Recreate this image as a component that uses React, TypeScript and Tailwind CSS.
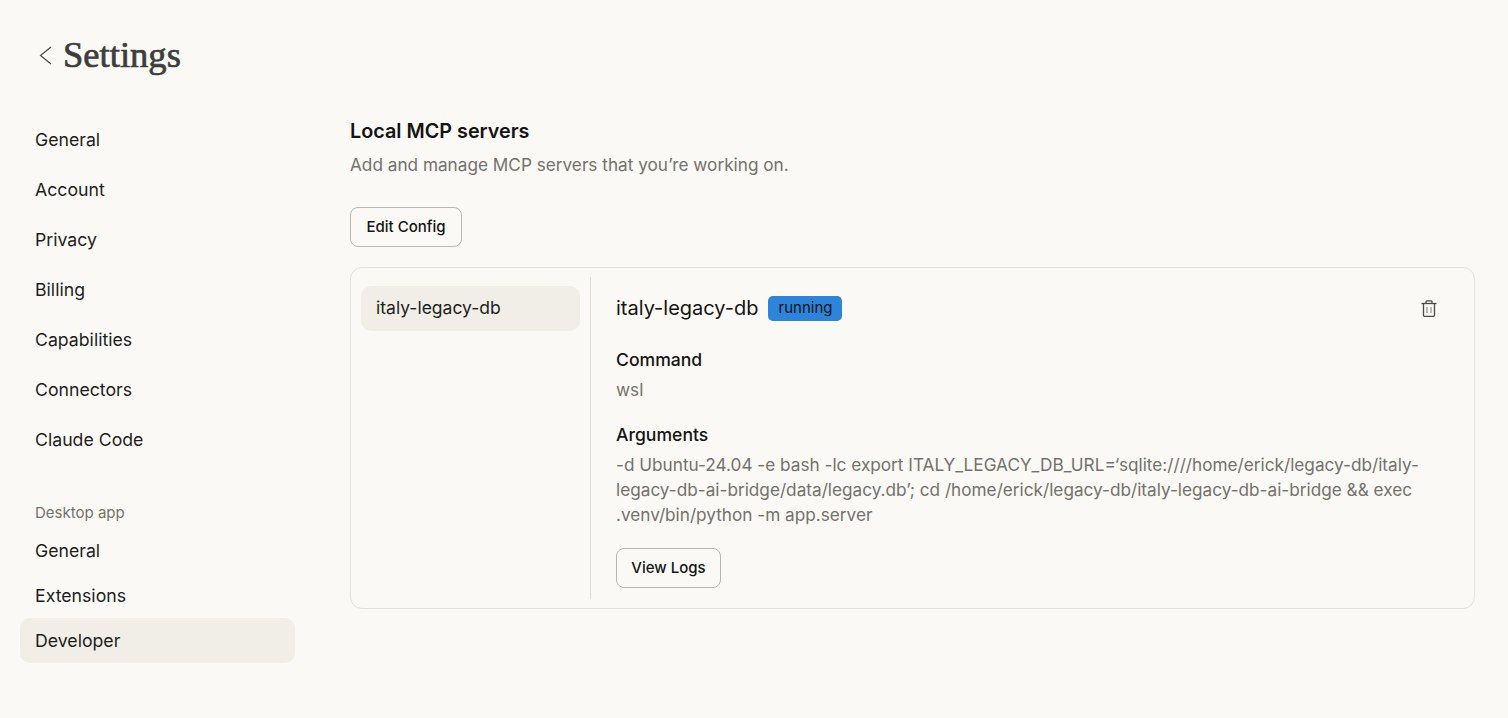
const MAIN_NAV = ['General', 'Account', 'Privacy', 'Billing', 'Capabilities', 'Connectors', 'Claude Code'];
const DESKTOP_NAV = ['General', 'Extensions', 'Developer'];

function NavItem({ label, active, desktop }: { label: string; active?: boolean; desktop?: boolean }) {
  return (
    <div
      className={`flex h-[45px] items-center rounded-[10px] px-[15px] text-[17.7px] text-[#1f1e1c] ${desktop ? 'pt-[2px]' : ''} ${active ? 'bg-[#f0eee6]' : ''}`}
    >
      {label}
    </div>
  );
}

function OutlineButton({ label, width }: { label: string; width: string }) {
  return (
    <button
      type="button"
      className={`flex h-10 items-center justify-center rounded-lg border border-[#b9b7b0] text-[15px] font-medium text-[#141413] ${width}`}
    >
      {label}
    </button>
  );
}

export default function App() {
  return (
    <div className="h-[718px] w-[1508px] overflow-hidden bg-[#faf9f5] font-['Inter',sans-serif]">
      {/* ===== Title ===== */}
      <header className="flex h-[110px] items-start pl-[39px] pt-[33px]">
        <svg width="13" height="19" viewBox="0 0 13 19" fill="none" stroke="#4a4945" strokeWidth="1.2" className="mt-[13px] flex-none">
          <polyline points="12,1 1.5,9.5 12,18" />
        </svg>
        <h1 className="ml-[11px] font-['Liberation_Serif',serif] text-[36.6px] leading-[44px] text-[#3d3d3a] [-webkit-text-stroke:0.7px_#3d3d3a]">
          Settings
        </h1>
      </header>

      <div className="flex">
        {/* ===== Left nav ===== */}
        <nav className="ml-5 flex w-[275px] flex-none flex-col">
          <div className="flex flex-col gap-[5px] pt-2">
            {MAIN_NAV.map((label) => (
              <NavItem key={label} label={label} />
            ))}
          </div>
          <div className="mt-[42px] mb-[7px] flex h-4 items-center px-[15px] text-[15px] text-[#73726c]">
            Desktop app
          </div>
          {DESKTOP_NAV.map((label) => (
            <NavItem key={label} label={label} desktop active={label === 'Developer'} />
          ))}
        </nav>

        {/* ===== Main content ===== */}
        <main className="ml-[55px] w-[1125px] flex-none pt-2">
          <h2 className="text-[19.8px] leading-[26px] font-semibold text-[#141413]">Local MCP servers</h2>
          <p className="mt-2 text-[17.2px] leading-[26px] text-[#73726c]">
            Add and manage MCP servers that you’re working on.
          </p>
          <div className="mt-[29px]">
            <OutlineButton label="Edit Config" width="w-28" />
          </div>

          <section className="mt-5 flex h-[342px] rounded-xl border border-[#e3e1da] py-[9px] pl-[10px]">
            <div className="w-[230px] flex-none border-r border-[#dedcd5] pr-[10px] pt-[9px]">
              <div className="flex h-[45px] items-center rounded-[10px] bg-[#f0eee6] px-[15px] text-[17.5px] text-[#1f1e1c]">
                italy-legacy-db
              </div>
            </div>

            <div className="min-w-0 flex-1 pl-[25px] pr-[28px]">
              <div className="mt-[19px] flex h-[25px] items-center">
                <span className="pb-[2px] text-[20px] text-[#141413]">italy-legacy-db</span>
                <span className="ml-[10px] flex h-[25px] w-[74px] items-center justify-center rounded-[5px] bg-[#2c84db] text-[15px] text-[#141413]">
                  running
                </span>
                <svg
                  width="16"
                  height="18"
                  viewBox="0 0 16 18"
                  fill="none"
                  stroke="#4a4945"
                  strokeWidth="1.3"
                  className="ml-auto mr-[9px] flex-none"
                >
                  <path d="M0.5 3.5h15" />
                  <path d="M5 3.5V1.8a1 1 0 0 1 1-1h4a1 1 0 0 1 1 1v1.7" />
                  <path d="M2.5 3.5v11.8a1 1 0 0 0 1 1h9a1 1 0 0 0 1-1V3.5" />
                  <path d="M6 7v6M10 7v6" strokeWidth="1.1" stroke="#8a8984" />
                </svg>
              </div>

              <div className="mt-[26px] text-[17.6px] leading-[26px] font-medium text-[#141413]">Command</div>
              <div className="mt-[4px] text-[17.2px] leading-[25px] text-[#73726c]">wsl</div>

              <div className="mt-[20px] text-[17.6px] leading-[26px] font-medium text-[#141413]">Arguments</div>
              <p className="mt-[4px] text-[17.2px] leading-[25px] text-[#73726c]">
                -d Ubuntu-24.04 -e bash -lc export ITALY_LEGACY_DB_URL=‘sqlite:////home/erick/legacy-db/italy-legacy-db-ai-bridge/data/legacy.db’; cd /home/erick/legacy-db/italy-legacy-db-ai-bridge &amp;&amp; exec .venv/bin/python -m app.server
              </p>
              <div className="mt-[21px]">
                <OutlineButton label="View Logs" width="w-[105px]" />
              </div>
            </div>
          </section>
        </main>
      </div>
    </div>
  );
}
